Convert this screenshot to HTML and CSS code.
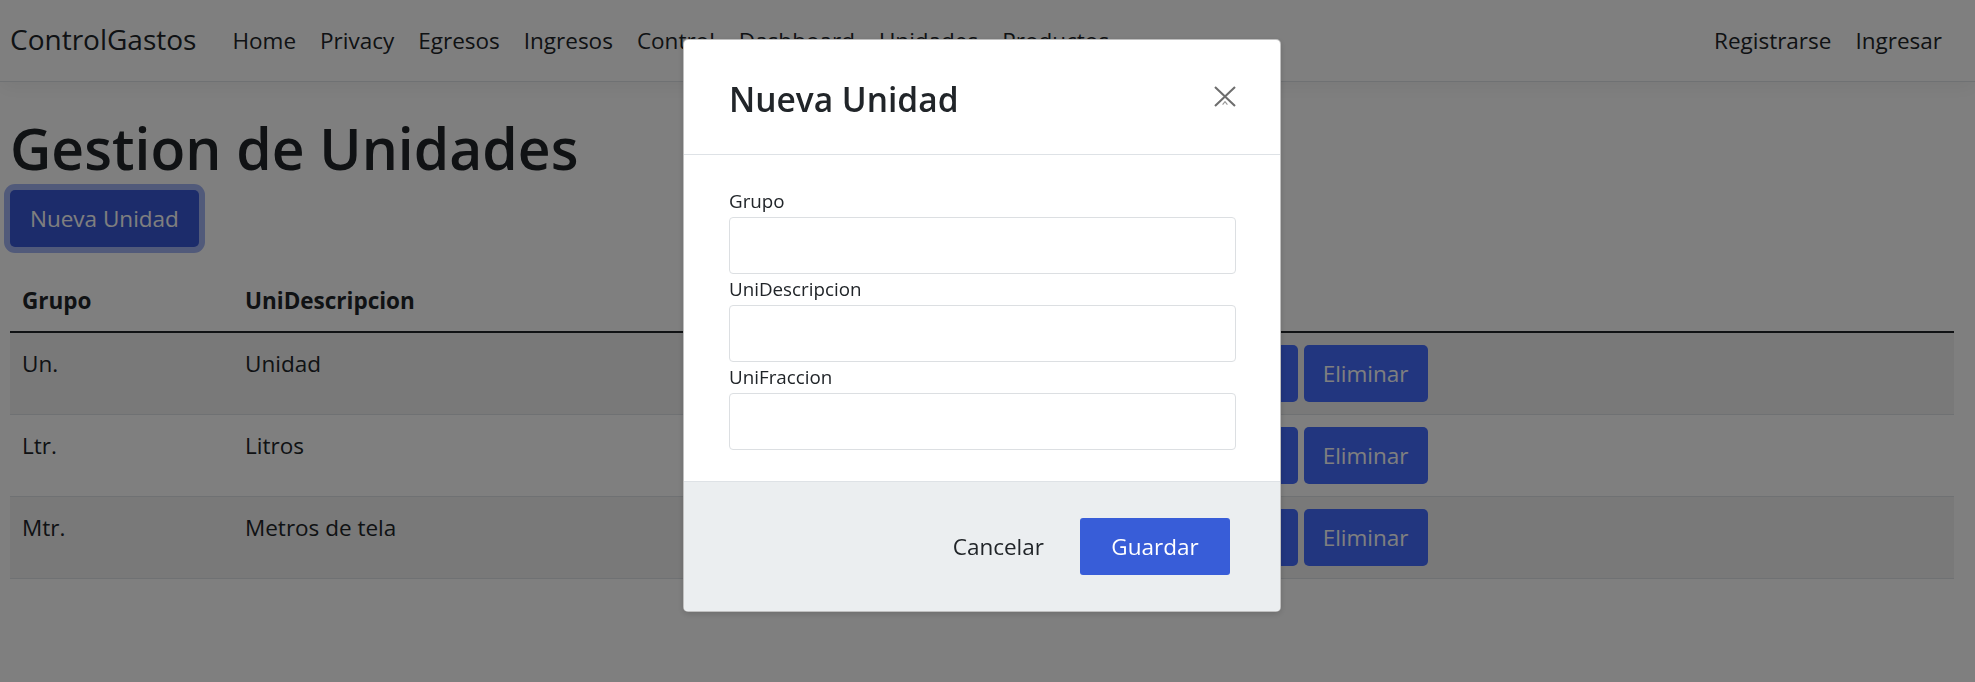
FILE: index.html
```html
<!DOCTYPE html>
<html lang="es">
<head>
<meta charset="utf-8">
<title>Gestion de Unidades - ControlGastos</title>
<link rel="stylesheet" href="styles.css">
</head>
<body>
<header class="navbar">
  <a class="brand" href="#">ControlGastos</a>
  <ul class="nav nav-main">
    <li><a class="nav-link" href="#">Home</a></li>
    <li><a class="nav-link" href="#">Privacy</a></li>
    <li><a class="nav-link" href="#">Egresos</a></li>
    <li><a class="nav-link" href="#">Ingresos</a></li>
    <li><a class="nav-link" href="#">Control</a></li>
    <li><a class="nav-link" href="#">Dashboard</a></li>
    <li><a class="nav-link" href="#">Unidades</a></li>
    <li><a class="nav-link" href="#">Productos</a></li>
  </ul>
  <ul class="nav nav-auth">
    <li><a class="nav-link" href="#">Registrarse</a></li>
    <li><a class="nav-link" href="#">Ingresar</a></li>
  </ul>
</header>

<main class="page">
  <h1 class="page-title">Gestion de Unidades</h1>
  <div class="page-actions">
    <button class="btn btn-primary btn-focused" type="button">Nueva Unidad</button>
  </div>
  <table class="units-table">
    <colgroup>
      <col class="col-grupo">
      <col class="col-desc">
      <col class="col-actions">
    </colgroup>
    <thead>
      <tr><th>Grupo</th><th>UniDescripcion</th><th></th></tr>
    </thead>
    <tbody>
      <tr class="striped">
        <td>Un.</td><td>Unidad</td>
        <td class="cell-actions"><button class="btn btn-row" type="button">Editar</button><button class="btn btn-row" type="button">Eliminar</button></td>
      </tr>
      <tr>
        <td>Ltr.</td><td>Litros</td>
        <td class="cell-actions"><button class="btn btn-row" type="button">Editar</button><button class="btn btn-row" type="button">Eliminar</button></td>
      </tr>
      <tr class="striped">
        <td>Mtr.</td><td>Metros de tela</td>
        <td class="cell-actions"><button class="btn btn-row" type="button">Editar</button><button class="btn btn-row" type="button">Eliminar</button></td>
      </tr>
    </tbody>
  </table>
</main>

<div class="modal-backdrop">
  <div class="modal" role="dialog" aria-modal="true">
    <div class="modal-header">
      <h4 class="modal-title">Nueva Unidad</h4>
      <button class="modal-close" type="button" aria-label="Cerrar">
        <svg width="22" height="21" viewBox="0 0 22 21" aria-hidden="true">
          <path d="M1 1L21 20M21 1L1 20" stroke="#6e6e6e" stroke-width="2.1" fill="none"/>
          <path d="M8.6 18.6L11 15.6L13.4 18.6" stroke="#9a9a9a" stroke-width="1.2" fill="none"/>
        </svg>
      </button>
    </div>
    <div class="modal-body">
      <label class="field-label" for="grupo">Grupo</label>
      <input class="field-input" id="grupo" type="text">
      <label class="field-label" for="desc">UniDescripcion</label>
      <input class="field-input" id="desc" type="text">
      <label class="field-label" for="frac">UniFraccion</label>
      <input class="field-input" id="frac" type="text">
    </div>
    <div class="modal-footer">
      <button class="btn-cancel" type="button">Cancelar</button>
      <button class="btn btn-save" type="button">Guardar</button>
    </div>
  </div>
</div>
</body>
</html>
```

FILE: styles.css
```css
* {
  box-sizing: border-box;
}

html, body {
  margin: 0;
  padding: 0;
}

body {
  background: #ffffff;
  color: #212529;
  font-family: "Open Sans", "Noto Sans", "Liberation Sans", sans-serif;
  font-size: 22.5px;
  line-height: 36px;
}

/* ---------- Navbar ---------- */
.navbar {
  display: flex;
  align-items: center;
  height: 82px;
  padding: 0 21px 0 10px;
  border-bottom: 1px solid #dee2e6;
  box-shadow: 0 6px 18px rgba(0, 0, 0, 0.05);
  background: #ffffff;
}

.brand {
  font-size: 28px;
  line-height: 45px;
  color: #212529;
  text-decoration: none;
  margin-right: 24px;
  margin-top: -2px;
}

.nav {
  display: flex;
  list-style: none;
  margin: 0;
  padding: 0;
}

.nav-auth {
  margin-left: auto;
}

.nav-link {
  display: block;
  padding: 0 12px;
  color: #212529;
  text-decoration: none;
  line-height: 36px;
}

/* ---------- Page ---------- */
.page {
  padding: 32px 21px 0 10px;
}

.page-title {
  margin: 0 0 8px;
  font-size: 57px;
  line-height: 68px;
  font-weight: 600;
}

.page-actions {
  display: flex;
  margin-bottom: 24px;
}

.btn {
  font-family: inherit;
  font-size: 22.5px;
  line-height: 36px;
  height: 57px;
  border: none;
  color: #ffffff;
  cursor: pointer;
}

.btn-primary {
  background: #3858d6;
  border-radius: 5px;
  padding: 0 20px;
}

.btn-focused {
  box-shadow: 0 0 0 6px #a3b5f5;
}

/* ---------- Table ---------- */
.units-table {
  width: 100%;
  border-collapse: collapse;
  table-layout: fixed;
}

.col-grupo {
  width: 223px;
}

.col-desc {
  width: 953px;
}

.units-table th {
  text-align: left;
  font-weight: 700;
  padding: 12px;
  border-bottom: 2px solid #212529;
  vertical-align: top;
}

.units-table td {
  padding: 13px 12px 12px;
  border-bottom: 1px solid #dee2e6;
  vertical-align: top;
}

.units-table tr.striped td {
  background: #f2f2f2;
}

.units-table td.cell-actions {
  padding: 12px;
}

.cell-actions {
  white-space: nowrap;
}

.btn-row {
  background: #446cfe;
  border-radius: 5px;
  padding: 0 19px;
  margin-right: 6px;
  vertical-align: top;
}

/* ---------- Modal ---------- */
.modal-backdrop {
  position: fixed;
  inset: 0;
  background: rgba(0, 0, 0, 0.5);
  display: flex;
  justify-content: center;
  align-items: flex-start;
  padding: 39px 11px 0 0;
}

.modal {
  width: 598px;
  background: #ffffff;
  border: 1px solid rgba(0, 0, 0, 0.25);
  border-radius: 5px;
  overflow: hidden;
  box-shadow: 0 2px 6px rgba(0, 0, 0, 0.15);
}

.modal-header {
  display: flex;
  justify-content: space-between;
  align-items: flex-start;
  padding: 37px 44px 33px 45px;
  border-bottom: 1px solid #dee2e6;
}

.modal-title {
  margin: 0;
  font-size: 33.5px;
  line-height: 44px;
  font-weight: 600;
  color: #212529;
}

.modal-close {
  margin-top: 9px;
  padding: 0;
  border: none;
  background: transparent;
  width: 22px;
  height: 21px;
  display: flex;
  cursor: pointer;
}

.modal-body {
  padding: 31px 44px 31px 45px;
}

.field-label {
  display: block;
  font-size: 18.8px;
  line-height: 31px;
  color: #212529;
}

.field-input {
  display: block;
  width: 100%;
  height: 57px;
  border: 1px solid #dcdfe2;
  border-radius: 4px;
  background: #ffffff;
  font-family: inherit;
  font-size: 22.5px;
  padding: 0 18px;
}

.modal-footer {
  display: flex;
  justify-content: flex-end;
  align-items: center;
  gap: 18px;
  padding: 36px 50px 36px 45px;
  border-top: 1px solid #dee2e6;
  background: #ebeef0;
}

.btn-cancel {
  font-family: inherit;
  font-size: 22.5px;
  line-height: 36px;
  padding: 0 18px;
  border: none;
  background: transparent;
  color: #212529;
  cursor: pointer;
}

.btn-save {
  width: 150px;
  background: #385dd8;
  border-radius: 3px;
  padding: 0;
}
```
